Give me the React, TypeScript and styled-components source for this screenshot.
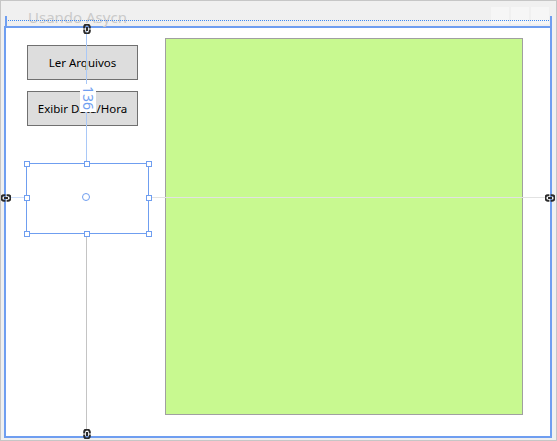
import React from "react";
import styled, { createGlobalStyle } from "styled-components";

const GlobalStyle = createGlobalStyle`
  * { box-sizing: border-box; }
  html, body { margin: 0; padding: 0; background: #ffffff; }
  body { font-family: "Noto Sans", "Open Sans", sans-serif; }
`;

const Window = styled.div`
  position: relative;
  width: 557px;
  height: 441px;
  background: #f0f0f0;
  border: 1px solid #c6c6c6;
  overflow: hidden;
`;

const TitleBar = styled.div`
  height: 25px;
  display: flex;
  align-items: center;
  justify-content: space-between;
  padding: 0 7px 0 27px;
`;

const Title = styled.span`
  font-size: 15px;
  color: #cacaca;
  margin-top: 6px;
`;

const Captions = styled.div`
  display: flex;
  gap: 2px;
  margin-top: 4px;
`;

const CaptionButton = styled.div`
  width: 18px;
  height: 17px;
  background: #f6f6f6;
`;

const Frame = styled.div`
  width: 548px;
  height: 412px;
  margin-left: 3px;
  border: 2px solid #6f9ef0;
  background: #ffffff;
  display: flex;
  padding: 10px 0 0 20px;
  gap: 16px;
`;

const Column = styled.div`
  width: 123px;
  display: flex;
  flex-direction: column;
  gap: 11px;
  padding-top: 7px;
`;

const FormButton = styled.div`
  width: 111px;
  height: 35px;
  margin-left: 1px;
  background: #dddddd;
  border: 1px solid #707070;
  display: flex;
  align-items: center;
  justify-content: center;
  font-size: 11.5px;
  color: #000;
`;

const Selected = styled.div`
  margin-top: 26px;
  width: 123px;
  height: 71px;
  border: 1px solid #6f9ef0;
`;

const Panel = styled.div`
  width: 358px;
  height: 377px;
  background: #c8f990;
  border: 1px solid #a0a0a0;
`;

/* designer adorners, drawn over the form */

const DottedGuide = styled.div`
  position: absolute;
  left: 4px;
  top: 19px;
  width: 546px;
  border-top: 1px dotted #3b88f2;
`;

const EdgeStub = styled.div<{ $x: number }>`
  position: absolute;
  left: ${(p) => p.$x}px;
  top: 15px;
  width: 2px;
  height: 12px;
  background: #6f9ef0;
`;

const VLine = styled.div<{ $top: number; $h: number; $c: string }>`
  position: absolute;
  left: 85px;
  top: ${(p) => p.$top}px;
  width: 1px;
  height: ${(p) => p.$h}px;
  background: ${(p) => p.$c};
`;

const HLine = styled.div<{ $left: number; $w: number; $c: string }>`
  position: absolute;
  top: 196px;
  left: ${(p) => p.$left}px;
  width: ${(p) => p.$w}px;
  height: 1px;
  background: ${(p) => p.$c};
`;

const Handle = styled.div<{ $x: number; $y: number }>`
  position: absolute;
  left: ${(p) => p.$x - 3}px;
  top: ${(p) => p.$y - 3}px;
  width: 6px;
  height: 6px;
  background: #fff;
  border: 1px solid #6f9ef0;
`;

const CenterDot = styled.div`
  position: absolute;
  left: 81px;
  top: 192px;
  width: 8px;
  height: 8px;
  border-radius: 50%;
  border: 1px solid #6f9ef0;
  background: #fff;
`;

const Distance = styled.div`
  position: absolute;
  left: 79px;
  top: 83px;
  width: 16px;
  height: 28px;
  background: #fff;
  display: flex;
  align-items: center;
  justify-content: center;
`;

const DistanceText = styled.span`
  transform: rotate(90deg);
  font-size: 14px;
  color: #6f9ef0;
  line-height: 1;
`;

const Anchor = styled.div<{ $x: number; $y: number; $rot: number }>`
  position: absolute;
  left: ${(p) => p.$x - 4}px;
  top: ${(p) => p.$y - 5}px;
  width: 8px;
  height: 10px;
  transform: rotate(${(p) => p.$rot}deg);
  line-height: 0;
`;

const AnchorIcon = () => (
  <svg width="8" height="10" viewBox="0 0 8 10">
    <path
      d="M1.2 4.4V3a2.8 2.6 0 0 1 5.6 0v1.4M1.2 5.6V7a2.8 2.6 0 0 0 5.6 0V5.6M4 3v4"
      fill="none"
      stroke="#2b2b2b"
      strokeWidth="2"
    />
  </svg>
);

const box = { l: 26, t: 163, r: 148, b: 233 };
const handles = [
  [box.l, box.t], [86, box.t], [box.r, box.t],
  [box.l, 197], [box.r, 197],
  [box.l, box.b], [86, box.b], [box.r, box.b],
];

const anchors = [
  { x: 86, y: 28, rot: 0 },
  { x: 5, y: 197, rot: 90 },
  { x: 549, y: 197, rot: 90 },
  { x: 86, y: 433, rot: 0 },
];

export default function App() {
  return (
    <>
      <GlobalStyle />
      <Window>
        <TitleBar>
          <Title>Usando Asycn</Title>
          <Captions>
            <CaptionButton />
            <CaptionButton />
            <CaptionButton />
          </Captions>
        </TitleBar>
        <Frame>
          <Column>
            <FormButton>Ler Arquivos</FormButton>
            <FormButton>Exibir Data/Hora</FormButton>
            <Selected />
          </Column>
          <Panel />
        </Frame>

        <DottedGuide />
        <EdgeStub $x={4} />
        <EdgeStub $x={549} />
        <VLine $top={30} $h={133} $c="#a9c8f7" />
        <VLine $top={234} $h={196} $c="#c4c4c4" />
        <HLine $left={8} $w={18} $c="#cfe0fb" />
        <HLine $left={149} $w={396} $c="#e2e2e2" />
        {handles.map(([x, y], i) => (
          <Handle key={i} $x={x} $y={y} />
        ))}
        <CenterDot />
        <Distance>
          <DistanceText>136</DistanceText>
        </Distance>
        {anchors.map((a, i) => (
          <Anchor key={i} $x={a.x} $y={a.y} $rot={a.rot}>
            <AnchorIcon />
          </Anchor>
        ))}
      </Window>
    </>
  );
}
